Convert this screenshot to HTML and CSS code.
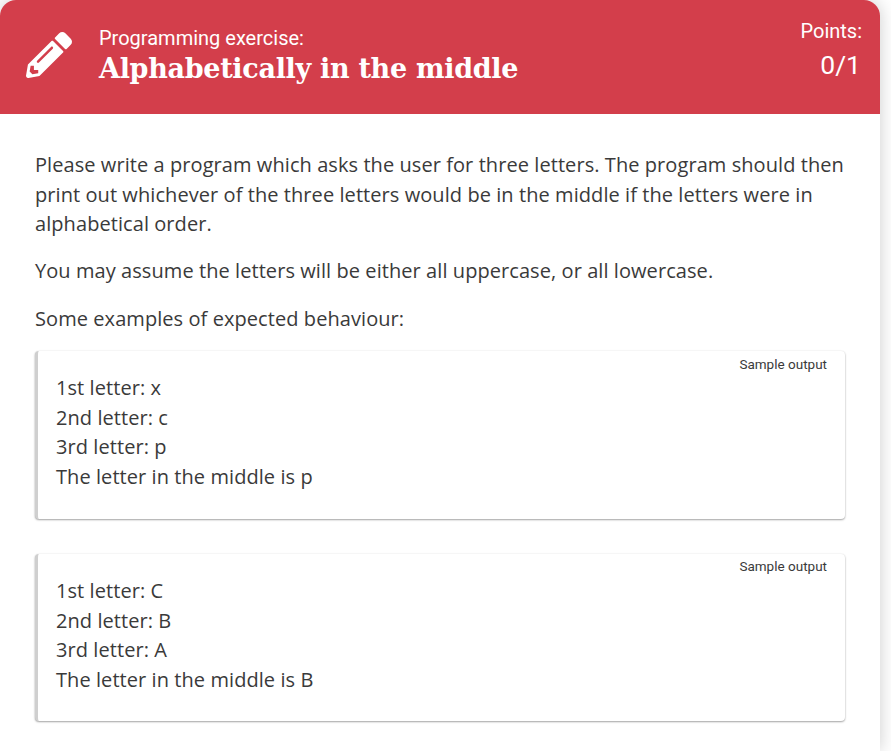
FILE: index.html
```html
<!DOCTYPE html>
<html lang="en">
<head>
<meta charset="utf-8">
<title>Alphabetically in the middle</title>
<link rel="stylesheet" href="styles.css">
</head>
<body>
<main class="card">
  <header class="head">
    <svg class="pencil" viewBox="0 0 512 512" aria-hidden="true"><path fill="#fff" d="M497.9 142.1l-46.1 46.1c-4.7 4.7-12.3 4.7-17 0l-111-111c-4.7-4.7-4.7-12.3 0-17l46.1-46.1c18.7-18.7 49.1-18.7 67.9 0l60.1 60.1c18.8 18.7 18.8 49.1 0 67.9zM284.2 99.8L21.6 362.4.4 483.9c-2.9 16.4 11.4 30.6 27.8 27.8l121.5-21.3 262.6-262.6c4.7-4.7 4.7-12.3 0-17l-111-111c-4.8-4.7-12.4-4.7-17.1 0zM124.1 339.9c-5.5-5.5-5.5-14.3 0-19.8l154-154c5.5-5.5 14.3-5.5 19.8 0s5.5 14.3 0 19.8l-154 154c-5.5 5.5-14.3 5.5-19.8 0zM88 424h48v36.3l-64.5 11.3-31.1-31.1L51.7 376H88v48z"/></svg>
    <div class="titles">
      <div class="kicker">Programming exercise:</div>
      <h1 class="title">Alphabetically in the middle</h1>
    </div>
    <div class="points">
      <div class="points-label">Points:</div>
      <div class="points-value">0/1</div>
    </div>
  </header>
  <section class="content">
    <p>Please write a program which asks the user for three letters. The program should then print out whichever of the three letters would be in the middle if the letters were in alphabetical order.</p>
    <p>You may assume the letters will be either all uppercase, or all lowercase.</p>
    <p>Some examples of expected behaviour:</p>
    <div class="sample">
      <div class="sample-label">Sample output</div>
      <div class="sample-text">1st letter: x<br>2nd letter: c<br>3rd letter: p<br>The letter in the middle is p</div>
    </div>
    <div class="sample">
      <div class="sample-label">Sample output</div>
      <div class="sample-text">1st letter: C<br>2nd letter: B<br>3rd letter: A<br>The letter in the middle is B</div>
    </div>
  </section>
</main>
</body>
</html>
```
FILE: styles.css
```css
html, body {
  margin: 0;
  height: 751px;
  overflow: hidden;
  background: #fff;
}
.card {
  width: 880px;
  height: 751px;
  background: #fff;
  border-radius: 16px 16px 0 0;
  box-shadow: 0 0 18px rgba(0, 0, 0, 0.2);
  overflow: hidden;
}
.head {
  display: flex;
  height: 114px;
  background: #d33e4b;
  color: #fff;
  font-family: Roboto, sans-serif;
}
.pencil {
  width: 46px;
  height: 46px;
  margin: 32px 0 0 26px;
  flex: none;
}
.titles {
  flex: 1;
  margin: 25px 0 0 27px;
}
.kicker {
  font-size: 20px;
  line-height: 26px;
}
.title {
  margin: 1px 0 0;
  font-family: "DejaVu Serif", serif;
  font-size: 27px;
  line-height: 34px;
  font-weight: 700;
  letter-spacing: -0.3px;
}
.points {
  margin: 18px 18px 0 0;
  text-align: right;
}
.points-label {
  font-size: 20px;
  line-height: 26px;
}
.points-value {
  margin-top: 6px;
  padding-right: 1px;
  font-size: 26.5px;
  line-height: 30px;
}
.content {
  padding: 36px 35px 0;
  font-family: "Open Sans", sans-serif;
  font-size: 20px;
  line-height: 29.6px;
  letter-spacing: 0.07px;
  color: #3a3a3a;
}
.content p {
  margin: 0 0 17.6px;
}
.sample {
  position: relative;
  height: 167.8px;
  margin-bottom: 35px;
  padding-top: 22.4px;
  box-sizing: border-box;
  background: #fff;
  border-left: 3px solid #cfcfcf;
  border-radius: 4px;
  box-shadow: 0 1px 2px rgba(0, 0, 0, 0.35), 0 0 2px rgba(0, 0, 0, 0.08);
}
.sample-label {
  position: absolute;
  top: 4.8px;
  right: 18px;
  font-family: Roboto, sans-serif;
  font-size: 13.5px;
  letter-spacing: 0;
  line-height: 16px;
}
.sample-text {
  padding-left: 18px;
}
```
